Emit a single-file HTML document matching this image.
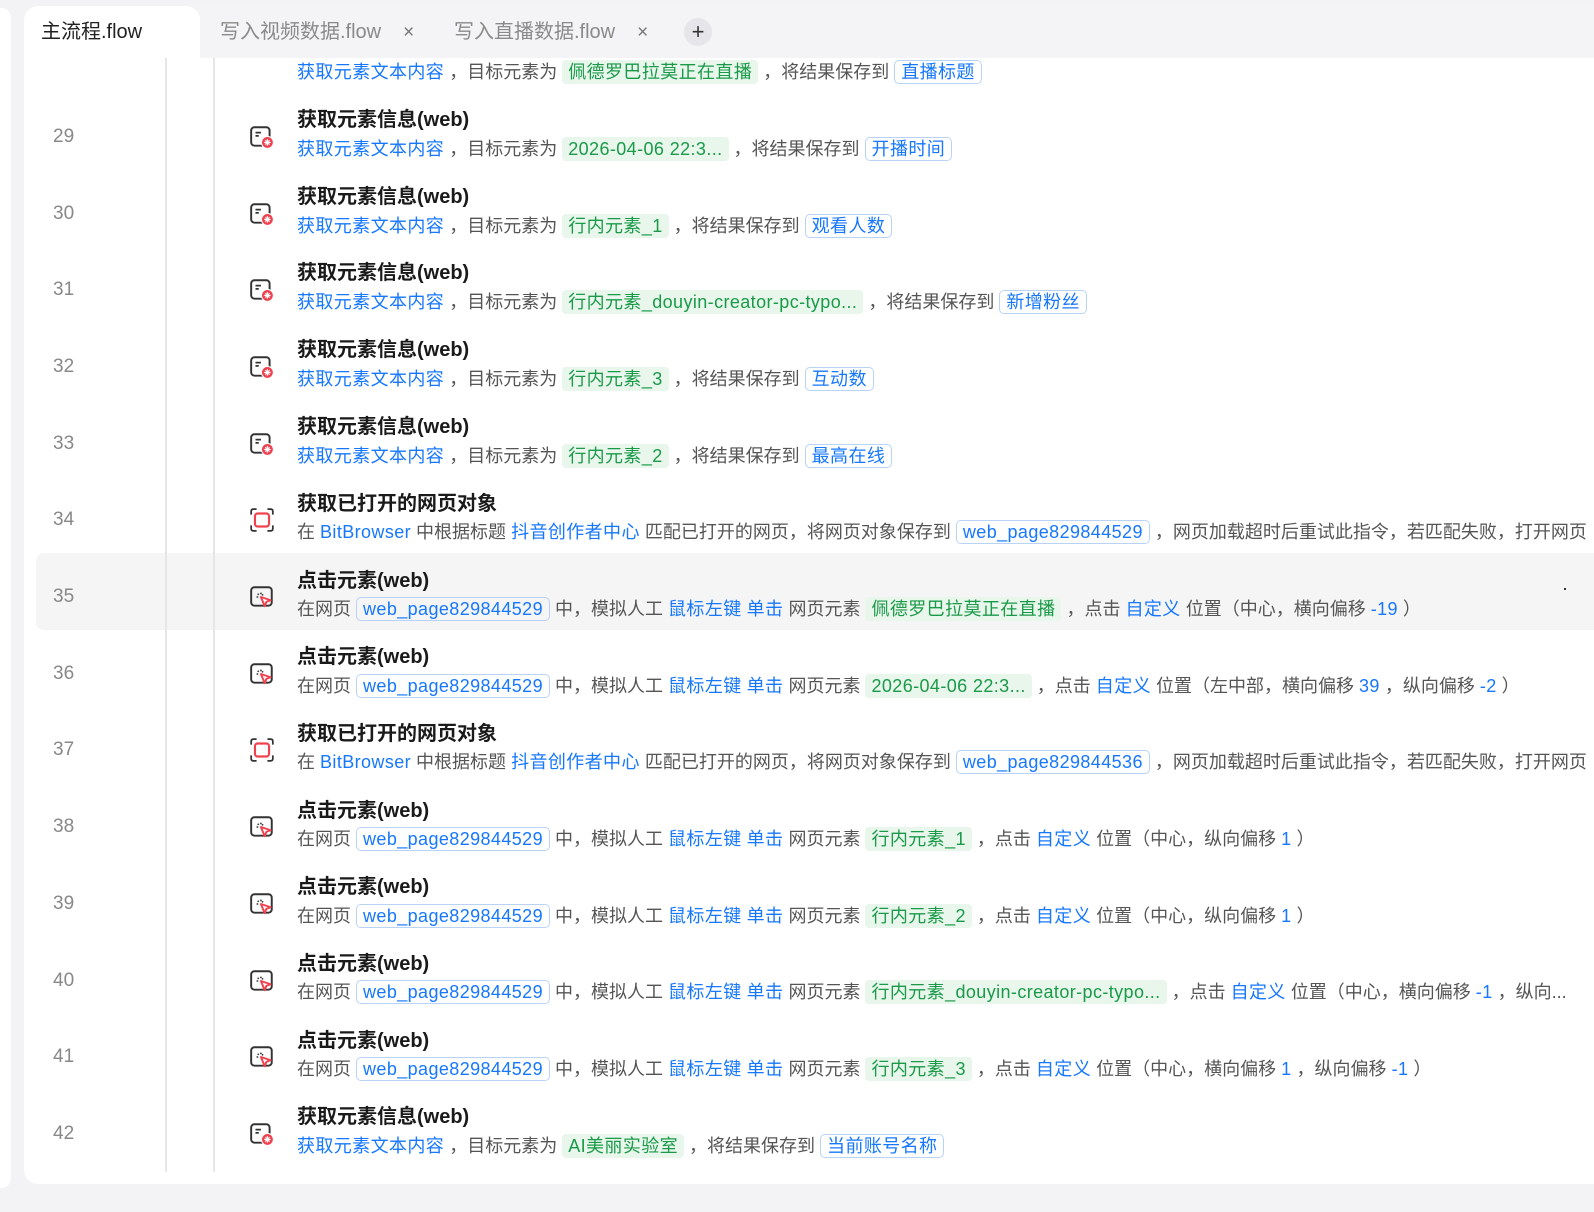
<!DOCTYPE html>
<html><head><meta charset="utf-8">
<style>
*{margin:0;padding:0;box-sizing:border-box}
body{width:1594px;height:1212px;background:#f3f3f5;font-family:"Liberation Sans","Noto Sans CJK SC",sans-serif;position:relative;overflow:hidden}
.leftstrip{position:absolute;left:0;top:8px;width:11px;height:1180px;background:#fff;border-radius:0 10px 10px 0}
.panel{position:absolute;left:24px;top:6px;width:1570px;height:1178px;background:#fff;border-radius:14px 0 0 14px;overflow:hidden}
.tabbar{position:absolute;left:0;top:0;width:1570px;height:52px;background:#f4f4f6}
.tab{position:absolute;top:0;height:52px;line-height:52px;font-size:20px;color:#8a8a8a}
.tab.active{left:0;width:176px;background:#fff;color:#222;padding-left:17px;border-radius:14px 14px 0 0}
.x{margin-left:22px;color:#777;font-size:19px}
.plus{position:absolute;left:660px;top:12px;width:28px;height:28px;border-radius:50%;background:#e6e6ea;text-align:center;line-height:27px;font-size:22px;color:#333}
.content{position:absolute;left:0;top:52px;width:1570px;height:1126px;overflow:hidden}
.vl{position:absolute;top:0;width:2px;height:1114px;background:#e6e6e6}
.hl{position:absolute;left:12px;top:495px;width:1570px;height:77px;background:#f5f5f5;border-radius:8px 0 0 8px}
.num{position:absolute;left:29px;font-size:19px;color:#888}
.ic{position:absolute;left:225px;width:26px;height:26px}
.t{position:absolute;left:273px;font-size:20px;font-weight:bold;color:#1a1a1a;white-space:nowrap}
.d{position:absolute;left:273px;font-size:18px;color:#555;white-space:nowrap;line-height:26px}
.b{color:#1677ff;letter-spacing:0.4px}
.g{background:#e8f6ec;color:#1a9a48;padding:2px 6px;border-radius:4px;letter-spacing:0.4px}
.o{color:#1677ff;border:1px solid #b9d3f7;padding:1px 6px;border-radius:5px;letter-spacing:0.4px}
</style></head><body>
<div class="leftstrip"></div>
<div class="panel">
<div class="tabbar">
<div class="tab active">主流程.flow</div>
<div class="tab" style="left:196px">写入视频数据.flow<span class="x">×</span></div>
<div class="tab" style="left:430px">写入直播数据.flow<span class="x">×</span></div>
<div class="plus">+</div>
</div>
<div class="content">
<div class="hl"></div>
<div style="position:absolute;left:1540px;top:530px;width:2px;height:2px;background:#333"></div>
<div class="vl" style="left:141px"></div>
<div class="vl" style="left:189px"></div>

<svg width="0" height="0" style="position:absolute">
<defs>
<symbol id="info" viewBox="0 0 24 24"><rect x="2" y="3" width="17" height="17" rx="3" fill="none" stroke="#333" stroke-width="1.8"/><path d="M6 8h5M6 11h3" stroke="#333" stroke-width="1.6"/><circle cx="17" cy="17" r="5.5" fill="#f0414f" stroke="#fff" stroke-width="1"/><path d="M15 15l4 4M19 15l-4 4M17 14v6M14 17h6" stroke="#fff" stroke-width="1.1"/></symbol>
<symbol id="click" viewBox="0 0 24 24"><rect x="2" y="3" width="19" height="17" rx="3" fill="none" stroke="#333" stroke-width="1.8"/><path d="M8 9l1 1M11 8v1.5M7 12h1.5M13 9.5l-1 1" stroke="#333" stroke-width="1.4"/><path d="M11 12l9 3-4 1.5-1.5 4z" fill="#fff" stroke="#f0414f" stroke-width="1.8" stroke-linejoin="round"/></symbol>
<symbol id="page" viewBox="0 0 24 24"><path d="M2 7V4q0-2 2-2h3M17 2h3q2 0 2 2v3M22 17v3q0 2-2 2h-3M7 22H4q-2 0-2-2v-3" fill="none" stroke="#333" stroke-width="1.6"/><rect x="5.5" y="6" width="13" height="12" rx="2.5" fill="none" stroke="#f0414f" stroke-width="2"/></symbol>
</defs></svg>

<div class="d" style="top:1px">
<span class="b">获取元素文本内容</span> ，目标元素为 <span class="g">佩德罗巴拉莫正在直播</span> ，将结果保存到 <span class="o">直播标题</span></div>

<div class="num" style="top:68px">29</div><svg class="ic" style="top:66px"><use href="#info"/></svg>
<div class="t" style="top:45px">获取元素信息(web)</div>
<div class="d" style="top:78px"><span class="b">获取元素文本内容</span> ，目标元素为 <span class="g">2026-04-06 22:3...</span> ，将结果保存到 <span class="o">开播时间</span></div>

<div class="num" style="top:145px">30</div><svg class="ic" style="top:143px"><use href="#info"/></svg>
<div class="t" style="top:122px">获取元素信息(web)</div>
<div class="d" style="top:155px"><span class="b">获取元素文本内容</span> ，目标元素为 <span class="g">行内元素_1</span> ，将结果保存到 <span class="o">观看人数</span></div>

<div class="num" style="top:221px">31</div><svg class="ic" style="top:219px"><use href="#info"/></svg>
<div class="t" style="top:198px">获取元素信息(web)</div>
<div class="d" style="top:231px"><span class="b">获取元素文本内容</span> ，目标元素为 <span class="g">行内元素_douyin-creator-pc-typo...</span> ，将结果保存到 <span class="o">新增粉丝</span></div>

<div class="num" style="top:298px">32</div><svg class="ic" style="top:296px"><use href="#info"/></svg>
<div class="t" style="top:275px">获取元素信息(web)</div>
<div class="d" style="top:308px"><span class="b">获取元素文本内容</span> ，目标元素为 <span class="g">行内元素_3</span> ，将结果保存到 <span class="o">互动数</span></div>

<div class="num" style="top:375px">33</div><svg class="ic" style="top:373px"><use href="#info"/></svg>
<div class="t" style="top:352px">获取元素信息(web)</div>
<div class="d" style="top:385px"><span class="b">获取元素文本内容</span> ，目标元素为 <span class="g">行内元素_2</span> ，将结果保存到 <span class="o">最高在线</span></div>

<div class="num" style="top:451px">34</div><svg class="ic" style="top:449px"><use href="#page"/></svg>
<div class="t" style="top:429px">获取已打开的网页对象</div>
<div class="d" style="top:461px">在 <span class="b">BitBrowser</span> 中根据标题 <span class="b">抖音创作者中心</span> 匹配已打开的网页，将网页对象保存到 <span class="o">web_page829844529</span> ，网页加载超时后重试此指令，若匹配失败，打开网页</div>

<div class="num" style="top:528px">35</div><svg class="ic" style="top:526px"><use href="#click"/></svg>
<div class="t" style="top:506px">点击元素(web)</div>
<div class="d" style="top:538px">在网页 <span class="o">web_page829844529</span> 中，模拟人工 <span class="b">鼠标左键</span> <span class="b">单击</span> 网页元素 <span class="g">佩德罗巴拉莫正在直播</span> ，点击 <span class="b">自定义</span> 位置（中心，横向偏移 <span class="b">-19</span> ）</div>

<div class="num" style="top:605px">36</div><svg class="ic" style="top:603px"><use href="#click"/></svg>
<div class="t" style="top:582px">点击元素(web)</div>
<div class="d" style="top:615px">在网页 <span class="o">web_page829844529</span> 中，模拟人工 <span class="b">鼠标左键</span> <span class="b">单击</span> 网页元素 <span class="g">2026-04-06 22:3...</span> ，点击 <span class="b">自定义</span> 位置（左中部，横向偏移 <span class="b">39</span> ，纵向偏移 <span class="b">-2</span> ）</div>

<div class="num" style="top:681px">37</div><svg class="ic" style="top:679px"><use href="#page"/></svg>
<div class="t" style="top:659px">获取已打开的网页对象</div>
<div class="d" style="top:691px">在 <span class="b">BitBrowser</span> 中根据标题 <span class="b">抖音创作者中心</span> 匹配已打开的网页，将网页对象保存到 <span class="o">web_page829844536</span> ，网页加载超时后重试此指令，若匹配失败，打开网页</div>

<div class="num" style="top:758px">38</div><svg class="ic" style="top:756px"><use href="#click"/></svg>
<div class="t" style="top:736px">点击元素(web)</div>
<div class="d" style="top:768px">在网页 <span class="o">web_page829844529</span> 中，模拟人工 <span class="b">鼠标左键</span> <span class="b">单击</span> 网页元素 <span class="g">行内元素_1</span> ，点击 <span class="b">自定义</span> 位置（中心，纵向偏移 <span class="b">1</span> ）</div>

<div class="num" style="top:835px">39</div><svg class="ic" style="top:833px"><use href="#click"/></svg>
<div class="t" style="top:812px">点击元素(web)</div>
<div class="d" style="top:845px">在网页 <span class="o">web_page829844529</span> 中，模拟人工 <span class="b">鼠标左键</span> <span class="b">单击</span> 网页元素 <span class="g">行内元素_2</span> ，点击 <span class="b">自定义</span> 位置（中心，纵向偏移 <span class="b">1</span> ）</div>

<div class="num" style="top:912px">40</div><svg class="ic" style="top:910px"><use href="#click"/></svg>
<div class="t" style="top:889px">点击元素(web)</div>
<div class="d" style="top:921px">在网页 <span class="o">web_page829844529</span> 中，模拟人工 <span class="b">鼠标左键</span> <span class="b">单击</span> 网页元素 <span class="g">行内元素_douyin-creator-pc-typo...</span> ，点击 <span class="b">自定义</span> 位置（中心，横向偏移 <span class="b">-1</span> ，纵向...</div>

<div class="num" style="top:988px">41</div><svg class="ic" style="top:986px"><use href="#click"/></svg>
<div class="t" style="top:966px">点击元素(web)</div>
<div class="d" style="top:998px">在网页 <span class="o">web_page829844529</span> 中，模拟人工 <span class="b">鼠标左键</span> <span class="b">单击</span> 网页元素 <span class="g">行内元素_3</span> ，点击 <span class="b">自定义</span> 位置（中心，横向偏移 <span class="b">1</span> ，纵向偏移 <span class="b">-1</span> ）</div>

<div class="num" style="top:1065px">42</div><svg class="ic" style="top:1063px"><use href="#info"/></svg>
<div class="t" style="top:1042px">获取元素信息(web)</div>
<div class="d" style="top:1075px"><span class="b">获取元素文本内容</span> ，目标元素为 <span class="g">AI美丽实验室</span> ，将结果保存到 <span class="o">当前账号名称</span></div>
</div>
</div>
</body></html>
